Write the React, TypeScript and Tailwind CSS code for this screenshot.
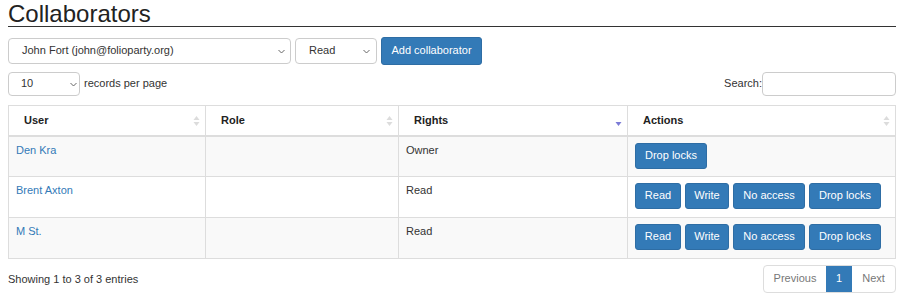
import React from 'react';

const SortIcon: React.FC<{ active?: boolean }> = ({ active }) => (
  <svg width="7" height="12" viewBox="0 0 7 12" className="absolute right-[5px] top-[9px]">
    {!active && <path d="M3.5 1 L6.5 5 L0.5 5 Z" fill="#dcdcdc" />}
    <path d="M3.5 11 L6.5 7 L0.5 7 Z" fill={active ? '#7b7bd6' : '#dcdcdc'} />
  </svg>
);

const Chevron: React.FC = () => (
  <svg width="7" height="5" viewBox="0 0 7 5" className="pointer-events-none">
    <path d="M0.5 1 L3.5 4 L6.5 1" stroke="#666" strokeWidth="1" fill="none" />
  </svg>
);

const Btn: React.FC<{ label: string; w: string }> = ({ label, w }) => (
  <button className={`h-[26px] ${w} rounded-[3px] border border-[#2e6da4] bg-[#337ab7] text-[11px] text-white`}>
    {label}
  </button>
);

const rows = [
  { user: 'Den Kra', rights: 'Owner', owner: true },
  { user: 'Brent Axton', rights: 'Read', owner: false },
  { user: 'M St.', rights: 'Read', owner: false },
];

const App: React.FC = () => {
  return (
    <div className="w-[904px] h-[299px] bg-white px-2 font-['Liberation_Sans',Arial,sans-serif] text-[11px] leading-[1.2] text-[#333]">
      <h2 className="pt-[2px] text-[24px] leading-[24px] text-[#222] border-b border-[#333] pb-[0px]">Collaborators</h2>

      {/* add collaborator */}
      <div className="mt-[10px] flex items-center gap-1">
        <div className="flex h-[26px] w-[283px] items-center justify-between rounded-[4px] border border-[#ccc] pl-[13px] pr-[5px]">
          <span>John Fort (john@folioparty.org)</span>
          <Chevron />
        </div>
        <div className="flex h-[26px] w-[82px] items-center justify-between rounded-[4px] border border-[#ccc] pl-[13px] pr-[6px]">
          <span>Read</span>
          <Chevron />
        </div>
        <button className="h-[28px] w-[101px] rounded-[3px] border border-[#2e6da4] bg-[#337ab7] text-[11px] text-white">
          Add collaborator
        </button>
      </div>

      {/* length + search */}
      <div className="mt-[7px] flex items-center justify-between">
        <div className="flex items-center gap-1">
          <div className="flex h-[24px] w-[72px] items-center justify-between rounded-[4px] border border-[#ccc] pl-[12px] pr-[2px]">
            <span>10</span>
            <Chevron />
          </div>
          <span>records per page</span>
        </div>
        <div className="flex items-center">
          <span>Search:</span>
          <div className="h-[24px] w-[134px] rounded-[4px] border border-[#ccc]" />
        </div>
      </div>

      {/* table */}
      <table className="mt-[9px] w-[888px] border-collapse">
        <thead>
          <tr className="text-left">
            <th className="relative h-[30px] w-[197px] border border-[#ddd] border-b-2 pl-[15px] text-[11px] font-bold text-[#222]">
              User
              <SortIcon />
            </th>
            <th className="relative w-[193px] border border-[#ddd] border-b-2 pl-[15px] text-[11px] font-bold text-[#222]">
              Role
              <SortIcon />
            </th>
            <th className="relative w-[229px] border border-[#ddd] border-b-2 pl-[15px] text-[11px] font-bold text-[#222]">
              Rights
              <SortIcon active />
            </th>
            <th className="relative border border-[#ddd] border-b-2 pl-[15px] text-[11px] font-bold text-[#222]">
              Actions
              <SortIcon />
            </th>
          </tr>
        </thead>
        <tbody>
          {rows.map((r, i) => (
            <tr key={i} className={i % 2 === 0 ? 'bg-[#f9f9f9]' : 'bg-white'}>
              <td className="h-[41px] border border-[#ddd] pl-[7px] align-top pt-[7px]">
                <a className="text-[#337ab7]">{r.user}</a>
              </td>
              <td className="border border-[#ddd]" />
              <td className="border border-[#ddd] pl-[7px] align-top pt-[7px]">{r.rights}</td>
              <td className="border border-[#ddd] pl-[7px] align-top pt-[6px]">
                {r.owner ? (
                  <Btn label="Drop locks" w="w-[72px]" />
                ) : (
                  <div className="flex gap-1">
                    <Btn label="Read" w="w-[46px]" />
                    <Btn label="Write" w="w-[44px]" />
                    <Btn label="No access" w="w-[72px]" />
                    <Btn label="Drop locks" w="w-[72px]" />
                  </div>
                )}
              </td>
            </tr>
          ))}
        </tbody>
      </table>

      {/* footer */}
      <div className="mt-[6px] flex items-center justify-between">
        <span className="mt-[1px]">Showing 1 to 3 of 3 entries</span>
        <div className="flex h-[28px] overflow-hidden rounded-[4px] border border-[#ddd]">
          <span className="flex w-[62px] items-center justify-center text-[#777]">Previous</span>
          <span className="flex w-[26px] items-center justify-center bg-[#337ab7] text-white">1</span>
          <span className="flex w-[43px] items-center justify-center text-[#777]">Next</span>
        </div>
      </div>
    </div>
  );
};

export default App;
